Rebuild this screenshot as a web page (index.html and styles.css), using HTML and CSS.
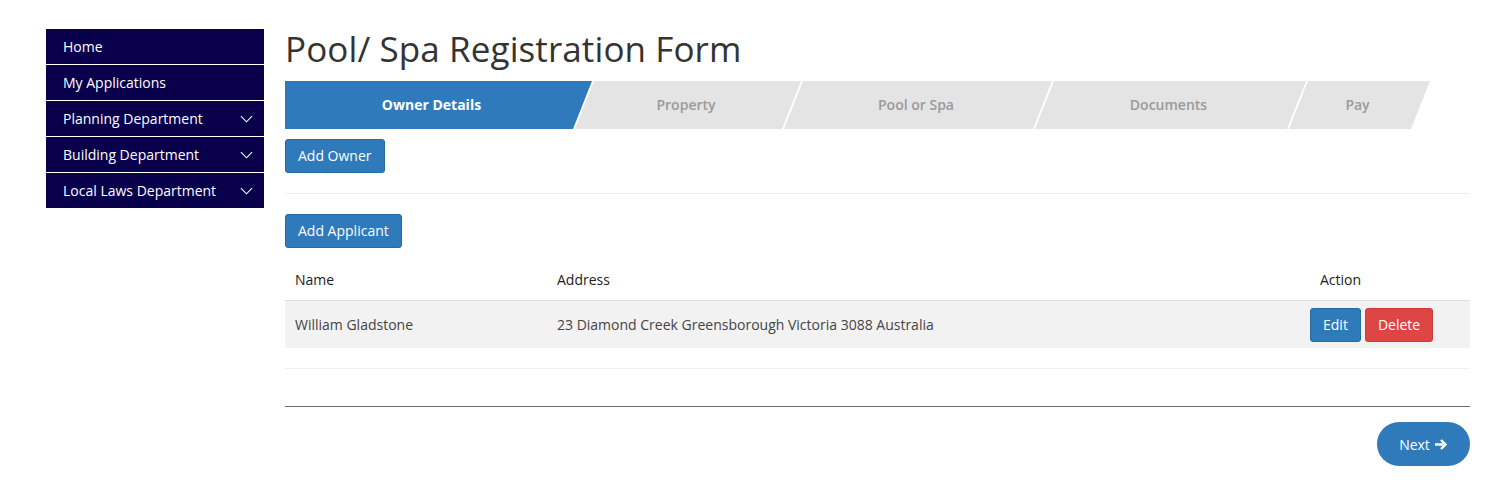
FILE: index.html
```html
<!DOCTYPE html>
<html>
<head>
<meta charset="utf-8">
<link rel="stylesheet" href="styles.css">
</head>
<body>
<div class="page">
  <nav class="sidebar">
    <a class="nav-item">Home</a>
    <a class="nav-item">My Applications</a>
    <a class="nav-item">Planning Department<svg class="chev" viewBox="0 0 14 8"><path d="M1 1l6 6 6-6"/></svg></a>
    <a class="nav-item">Building Department<svg class="chev" viewBox="0 0 14 8"><path d="M1 1l6 6 6-6"/></svg></a>
    <a class="nav-item">Local Laws Department<svg class="chev" viewBox="0 0 14 8"><path d="M1 1l6 6 6-6"/></svg></a>
  </nav>
  <main class="main">
    <h1 class="title">Pool/ Spa Registration Form</h1>
    <div class="steps">
      <div class="step step-first active">Owner Details</div>
      <div class="step step-property">Property</div>
      <div class="step step-pool">Pool or Spa</div>
      <div class="step step-docs">Documents</div>
      <div class="step step-pay">Pay</div>
    </div>
    <button class="btn btn-primary">Add Owner</button>
    <hr class="rule">
    <button class="btn btn-primary">Add Applicant</button>
    <div class="table">
      <div class="row head">
        <div class="cell">Name</div>
        <div class="cell">Address</div>
        <div class="cell">Action</div>
      </div>
      <div class="row body">
        <div class="cell">William Gladstone</div>
        <div class="cell">23 Diamond Creek Greensborough Victoria 3088 Australia</div>
        <div class="cell actions">
          <button class="btn btn-primary btn-sm">Edit</button>
          <button class="btn btn-danger btn-sm">Delete</button>
        </div>
      </div>
    </div>
    <hr class="rule rule-bottom">
    <hr class="rule-dark">
    <div class="footer">
      <button class="btn-next">Next <svg class="arrow" viewBox="0 0 14 12"><path d="M1 6h11M7 1.5L11.5 6 7 10.5"/></svg></button>
    </div>
  </main>
</div>
</body>
</html>
```

FILE: styles.css
```css
* { box-sizing: border-box; }
html, body { margin: 0; padding: 0; background: #fff; }
body {
  font-family: "Open Sans", "Liberation Sans", sans-serif;
  font-size: 14px;
  color: #333;
}
.page {
  display: flex;
  gap: 21px;
  padding: 29px 33px 0 46px;
}
.sidebar {
  width: 218px;
  flex: none;
  display: flex;
  flex-direction: column;
  align-self: flex-start;
}
.nav-item {
  display: flex;
  align-items: center;
  justify-content: space-between;
  height: 36px;
  padding: 0 11px 0 17px;
  background: #08004a;
  color: #fff;
  font-size: 14px;
  border-bottom: 1px solid #fff;
}
.nav-item:last-child { border-bottom: none; height: 35px; }
.chev {
  width: 13px;
  height: 8px;
  fill: none;
  stroke: #fff;
  stroke-width: 1.2;
}
.main {
  flex: 1;
  display: flex;
  flex-direction: column;
  align-items: flex-start;
}
.title {
  margin: 0;
  font-size: 35px;
  font-weight: 500;
  line-height: 38px;
  letter-spacing: 0.1px;
  color: #333;
  height: 52px;
  padding-top: 1px;
}
.steps {
  display: flex;
  height: 48px;
  width: 100%;
  margin-bottom: 10px;
}
.step {
  height: 48px;
  display: flex;
  align-items: center;
  justify-content: center;
  padding-bottom: 2px;
  background: #e4e4e4;
  color: #9a9a9a;
  font-weight: 600;
  font-size: 14px;
  margin-left: -17px;
  clip-path: polygon(19px 0, 100% 0, calc(100% - 19px) 100%, 0 100%);
}
.step.active {
  background: #2f7abb;
  color: #fff;
  font-weight: 700;
}
.step-first {
  margin-left: 0;
  width: 307px;
  padding-right: 14px;
  clip-path: polygon(0 0, 100% 0, calc(100% - 19px) 100%, 0 100%);
}
.step-property { width: 226px; padding-right: 4px; }
.step-pool { width: 268px; padding-right: 4px; }
.step-docs { width: 271px; padding-right: 4px; }
.step-pay { width: 141px; padding-right: 4px; }
.btn {
  font-family: inherit;
  font-size: 14px;
  color: #fff;
  border-radius: 3px;
  border: 1px solid transparent;
  padding: 0 12px;
  height: 34px;
  line-height: 32px;
  cursor: pointer;
}
.btn-primary {
  background: #2f7abb;
  border-color: #2a6aa3;
}
.btn-danger {
  background: #de4545;
  border-color: #c93a3a;
}
.btn-sm { height: 34px; padding: 0 12px; }
.rule {
  width: 100%;
  border: 0;
  border-top: 1px solid #eeeeee;
  margin: 20px 0 20px;
}
.table {
  width: 100%;
  margin-top: 14px;
}
.row {
  display: grid;
  grid-template-columns: 262px 1fr 160px;
  align-items: center;
}
.row.head {
  height: 39px;
  padding-bottom: 3px;
  color: #222;
  border-bottom: 1px solid #dddddd;
}
.row.body {
  height: 47px;
  background: #f2f2f2;
  color: #444;
}
.cell { padding: 0 10px; }
.actions {
  display: flex;
  gap: 4px;
  padding-left: 0;
}
.rule-bottom { margin: 20px 0 0; }
.rule-dark {
  width: 100%;
  border: 0;
  border-top: 1px solid #6b6b6b;
  margin: 37px 0 0;
}
.footer {
  width: 100%;
  display: flex;
  justify-content: flex-end;
  padding-top: 15px;
}
.btn-next {
  font-family: inherit;
  font-size: 14px;
  color: #fff;
  background: #2f7abb;
  border: none;
  border-radius: 22px;
  height: 44px;
  width: 93px;
  display: flex;
  align-items: center;
  justify-content: center;
  gap: 4px;
  cursor: pointer;
}
.arrow {
  width: 14px;
  height: 13px;
  fill: none;
  stroke: #fff;
  stroke-width: 2.4;
}
```
